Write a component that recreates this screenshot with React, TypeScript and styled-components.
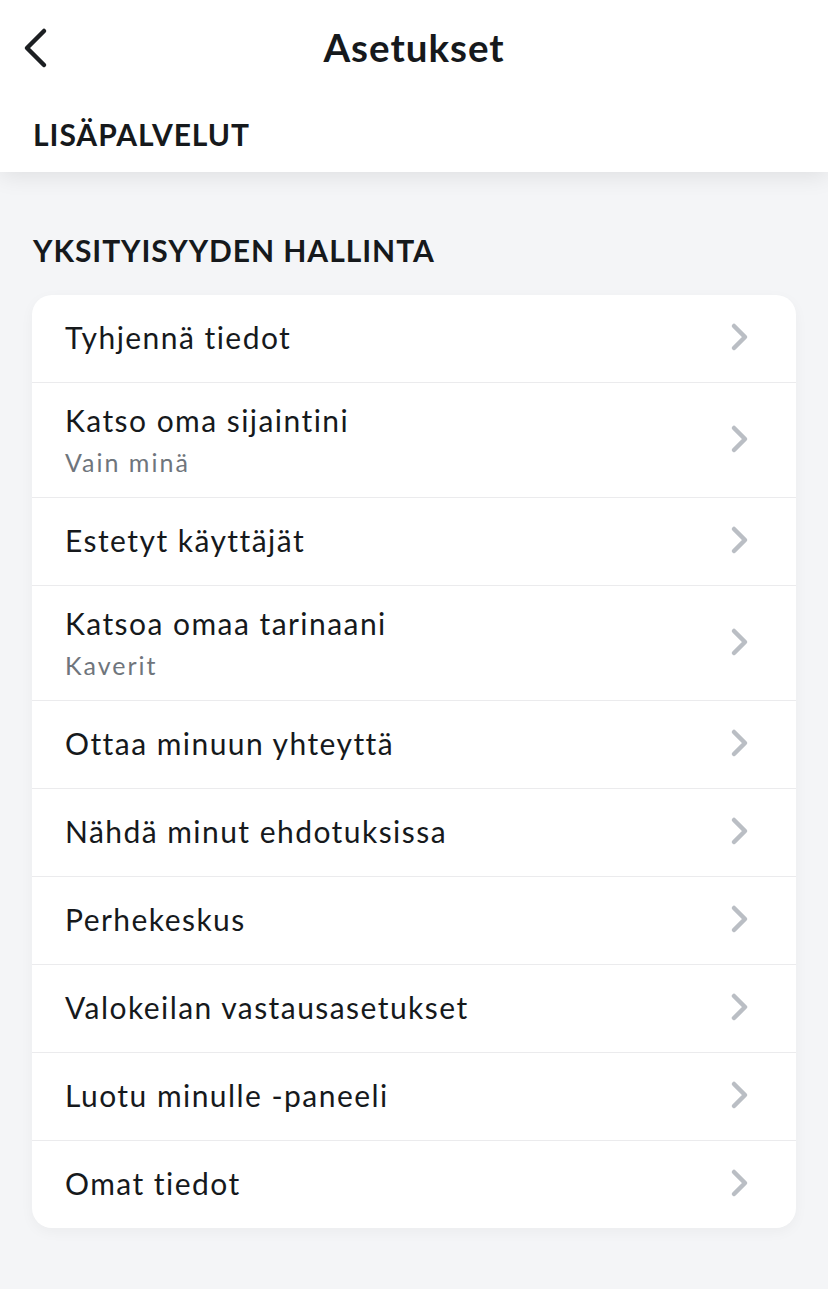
import React from "react";
import styled, { createGlobalStyle } from "styled-components";

const GlobalStyle = createGlobalStyle`
  html, body {
    margin: 0;
    padding: 0;
    background: #f4f5f7;
  }
  body {
    font-family: Lato, "Noto Sans", sans-serif;
    color: #16191c;
    -webkit-font-smoothing: antialiased;
  }
`;

const Page = styled.div`
  width: 828px;
  min-height: 1289px;
  background: #f4f5f7;
`;

const Header = styled.header`
  background: #fff;
  height: 172px;
  display: flex;
  flex-direction: column;
  box-shadow: 0 4px 22px rgba(0, 0, 0, 0.09);
  position: relative;
  z-index: 1;
`;

const TopBar = styled.div`
  height: 96px;
  display: grid;
  grid-template-columns: 96px 1fr 96px;
  align-items: center;
`;

const BackButton = styled.button`
  border: 0;
  background: none;
  padding: 0 0 0 21px;
  display: flex;
  align-items: center;
  height: 60px;
  cursor: pointer;
`;

const Title = styled.h1`
  margin: 0;
  text-align: center;
  font-size: 38.5px;
  font-weight: 700;
  letter-spacing: 1px;
  padding-bottom: 2px;
`;

const SectionTitle = styled.h2<{ $top: number; $side: number }>`
  margin: 0;
  padding: ${(p) => p.$top}px ${(p) => p.$side}px 0;
  font-size: 30px;
  font-weight: 700;
  letter-spacing: 0.95px;
  text-transform: uppercase;
  line-height: 36px;
`;

const Content = styled.main`
  padding: 0 32px 40px;
  display: flex;
  flex-direction: column;
`;

const Card = styled.div`
  margin-top: 27px;
  background: #fff;
  border-radius: 20px;
  box-shadow: 0 4px 14px rgba(0, 0, 0, 0.04);
  overflow: hidden;
`;

const Row = styled.div<{ $tall?: boolean }>`
  height: ${(p) => (p.$tall ? 111 : 84)}px;
  display: flex;
  align-items: center;
  padding: 0 46px 3px 33px;
  & + & {
    border-top: 1px solid #ebebed;
  }
`;

const Labels = styled.div`
  flex: 1;
  display: flex;
  flex-direction: column;
`;

const Label = styled.span`
  font-size: 30px;
  line-height: 38px;
  font-weight: 400;
  letter-spacing: 1.45px;
`;

const Sub = styled.span`
  font-size: 25px;
  line-height: 30px;
  color: #6f757c;
  letter-spacing: 2px;
  margin-top: 8px;
`;

const Chevron = () => (
  <svg width="20" height="30" viewBox="0 0 20 30" fill="none">
    <path
      d="M4 4 L15 15 L4 26"
      stroke="#babec4"
      strokeWidth="4.5"
      strokeLinecap="round"
      strokeLinejoin="round"
    />
  </svg>
);

const BackIcon = () => (
  <svg width="28" height="42" viewBox="0 0 28 42" fill="none">
    <path
      d="M23 4 L6 21 L23 38"
      stroke="#1c1f22"
      strokeWidth="4.5"
      strokeLinecap="round"
      strokeLinejoin="round"
    />
  </svg>
);

const items: { label: string; sub?: string }[] = [
  { label: "Tyhjennä tiedot" },
  { label: "Katso oma sijaintini", sub: "Vain minä" },
  { label: "Estetyt käyttäjät" },
  { label: "Katsoa omaa tarinaani", sub: "Kaverit" },
  { label: "Ottaa minuun yhteyttä" },
  { label: "Nähdä minut ehdotuksissa" },
  { label: "Perhekeskus" },
  { label: "Valokeilan vastausasetukset" },
  { label: "Luotu minulle -paneeli" },
  { label: "Omat tiedot" },
];

export default function App() {
  return (
    <>
      <GlobalStyle />
      <Page>
        <Header>
          <TopBar>
            <BackButton aria-label="Takaisin">
              <BackIcon />
            </BackButton>
            <Title>Asetukset</Title>
            <div />
          </TopBar>
          <SectionTitle $top={20} $side={33}>
            Lisäpalvelut
          </SectionTitle>
        </Header>
        <Content>
          <SectionTitle $top={60} $side={1}>
            Yksityisyyden hallinta
          </SectionTitle>
          <Card>
            {items.map((it) => (
              <Row key={it.label} $tall={!!it.sub}>
                <Labels>
                  <Label>{it.label}</Label>
                  {it.sub && <Sub>{it.sub}</Sub>}
                </Labels>
                <Chevron />
              </Row>
            ))}
          </Card>
        </Content>
      </Page>
    </>
  );
}
